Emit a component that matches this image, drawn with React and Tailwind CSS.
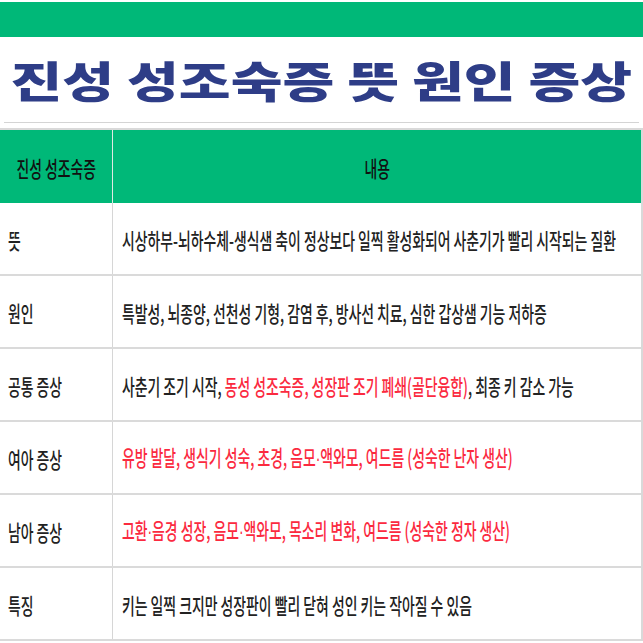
const rows = [
  { label: '뜻', parts: [{ t: '시상하부-뇌하수체-생식샘 축이 정상보다 일찍 활성화되어 사춘기가 빨리 시작되는 질환' }] },
  { label: '원인', parts: [{ t: '특발성, 뇌종양, 선천성 기형, 감염 후, 방사선 치료, 심한 갑상샘 기능 저하증' }] },
  {
    label: '공통 증상',
    parts: [
      { t: '사춘기 조기 시작, ' },
      { t: '동성 성조숙증, 성장판 조기 폐쇄(골단융합)', red: true },
      { t: ', 최종 키 감소 가능' },
    ],
  },
  { label: '여아 증상', parts: [{ t: '유방 발달, 생식기 성숙, 초경, 음모·액와모, 여드름 (성숙한 난자 생산)', red: true }] },
  { label: '남아 증상', parts: [{ t: '고환·음경 성장, 음모·액와모, 목소리 변화, 여드름 (성숙한 정자 생산)', red: true }] },
  { label: '특징', parts: [{ t: '키는 일찍 크지만 성장판이 빨리 닫혀 성인 키는 작아질 수 있음' }] },
];

const bodyFont = { fontFamily: '"Noto Sans CJK KR", "Noto Sans", sans-serif' };

// 좁고 높은 글꼴 느낌을 내려고 가로로 줄임
function Narrow({ children, center }) {
  return (
    <span
      className={`inline-block whitespace-nowrap text-[22px] leading-none font-medium scale-x-[0.63] ${center ? 'origin-center' : 'origin-left'}`}
    >
      {children}
    </span>
  );
}

// 가운뎃점은 전각이라 넓게 찍혀서 라틴 글꼴로 바꿈
function WithDots({ text }) {
  const bits = text.split('·');
  return bits.map((b, i) => (
    <span key={i}>
      {b}
      {i < bits.length - 1 && <span className="font-['Liberation_Sans']">·</span>}
    </span>
  ));
}

export default function App() {
  return (
    <div className="w-[643px] h-[643px] overflow-hidden bg-white" style={bodyFont}>
      <div className="h-[2px] bg-white" />
      <div className="h-[35px] bg-[#00b878]" />

      {/* 제목 */}
      <div className="h-[85px] flex items-center justify-center">
        <h1 className="inline-block text-[43px] leading-none font-black text-[#2e3d87] whitespace-nowrap scale-x-[1.31] origin-center">
          진성 성조숙증 뜻 원인 증상
        </h1>
      </div>
      <div className="h-px mx-[4px] bg-[#d4d4d4]" />
      <div className="h-[5px]" />

      {/* 표 */}
      <div className="border-t-2 border-r-2 border-[#d9d9d9] w-[643px]">
        <div className="flex h-[73px] bg-[#00b878] text-[#111]">
          <div className="w-[113px] shrink-0 flex items-center justify-center border-r border-[#dfe9e3]">
            <Narrow center>진성 성조숙증</Narrow>
          </div>
          <div className="flex-1 flex items-center justify-center">
            <Narrow center>내용</Narrow>
          </div>
        </div>
        {rows.map((r) => (
          <div key={r.label} className="flex h-[73px] border-b-2 border-[#dadada] text-[#222]">
            <div className="w-[113px] shrink-0 flex items-center pl-[8px] border-r border-[#d6d6d6]">
              <Narrow>{r.label}</Narrow>
            </div>
            <div className="flex-1 flex items-center pl-[9px]">
              <Narrow>
                {r.parts.map((p, i) => (
                  <span key={i} className={p.red ? 'text-[#fb2a3f]' : ''}>
                    <WithDots text={p.t} />
                  </span>
                ))}
              </Narrow>
            </div>
          </div>
        ))}
      </div>
    </div>
  );
}
